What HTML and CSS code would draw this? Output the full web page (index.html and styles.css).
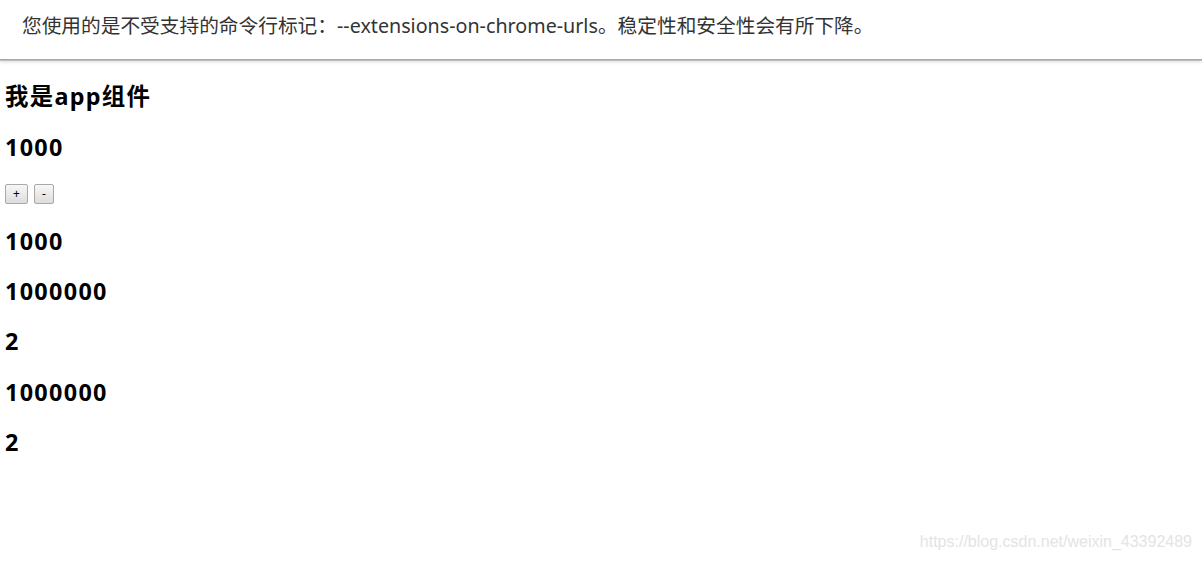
FILE: index.html
```html
<!DOCTYPE html>
<html lang="zh-CN">
<head>
<meta charset="utf-8">
<title>app</title>
<link rel="stylesheet" href="styles.css">
</head>
<body>
<div class="infobar">您使用的是不受支持的命令行标记：--extensions-on-chrome-urls。稳定性和安全性会有所下降。</div>
<div class="app">
  <h3 class="title">我是app组件</h3>
  <h3 class="title">1000</h3>
  <div class="buttons">
    <button class="btn btn-plus">+</button>
    <button class="btn btn-minus">-</button>
  </div>
  <h3 class="title">1000</h3>
  <h3 class="title">1000000</h3>
  <h3 class="title">2</h3>
  <h3 class="title">1000000</h3>
  <h3 class="title">2</h3>
</div>
<div class="watermark">https://blog.csdn.net/weixin_43392489</div>
</body>
</html>
```
FILE: styles.css
```css
html, body {
  margin: 0;
  padding: 0;
  background: #fff;
}
body {
  font-family: "Noto Sans", "Noto Sans CJK SC", sans-serif;
  color: #000;
  min-height: 561px;
  position: relative;
  overflow: hidden;
}
.infobar {
  box-sizing: border-box;
  height: 60px;
  padding: 12px 0 0 22px;
  font-size: 19.7px;
  line-height: 28px;
  color: #333;
  background: #fff;
  border-bottom: 1px solid #a8a8a8;
  box-shadow: 0 1px 1px rgba(0,0,0,0.18), 0 2px 4px rgba(0,0,0,0.12);
  position: relative;
  z-index: 1;
}
.app {
  padding: 0 0 0 5px;
}
.title {
  font-size: 23.4px;
  line-height: 27px;
  font-weight: bold;
  letter-spacing: 1.3px;
  margin: 23.4px 0;
}
.buttons {
  display: flex;
  gap: 6px;
  height: 20px;
  align-items: flex-start;
}
.btn {
  height: 20px;
  padding: 0;
  font-family: "Noto Sans", sans-serif;
  font-size: 12px;
  line-height: 16px;
  color: #000;
  border: 1px solid #a9a9a9;
  border-radius: 2px;
  background: linear-gradient(#f7f7f7, #dddddd);
}
.btn-plus { width: 23px; }
.btn-minus { width: 20px; }
.watermark {
  position: absolute;
  right: 10px;
  bottom: 9px;
  font-family: "Liberation Sans", Arial, sans-serif;
  font-size: 16px;
  line-height: 20px;
  color: #e4e4e4;
}
```
